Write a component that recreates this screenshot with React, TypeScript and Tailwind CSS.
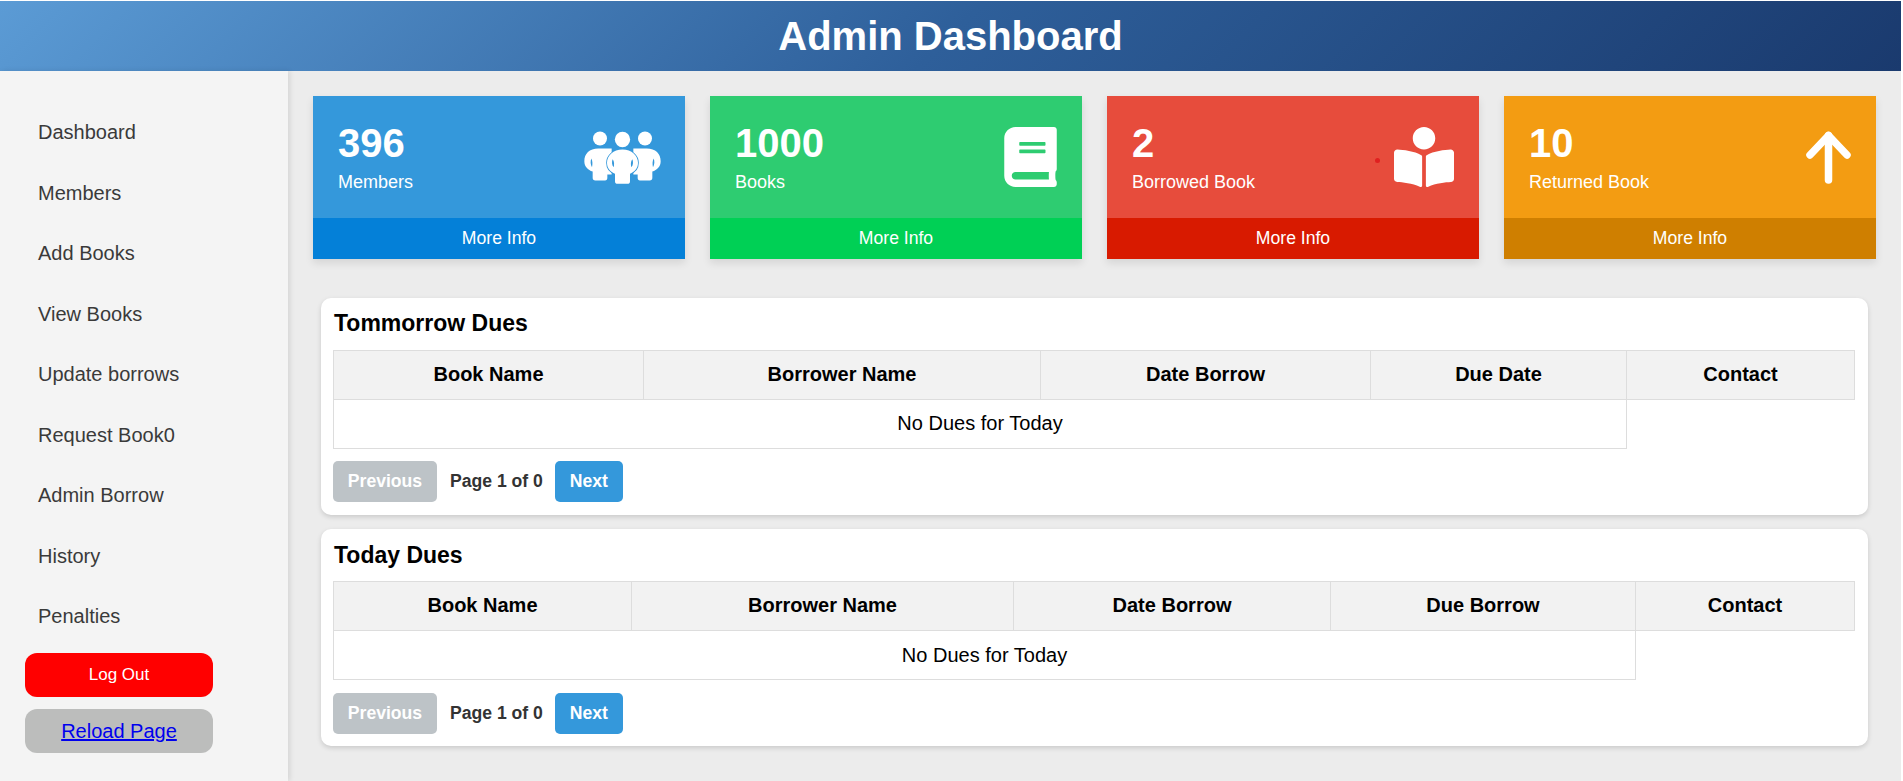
import type { ReactNode } from "react";
import { FaBook, FaBookReader } from "react-icons/fa";

const navItems = [
  "Dashboard",
  "Members",
  "Add Books",
  "View Books",
  "Update borrows",
  "Request Book0",
  "Admin Borrow",
  "History",
  "Penalties",
];

function ArrowIcon() {
  return (
    <svg viewBox="0 0 45 53" className="h-[53px] w-[45px]" fill="none" stroke="white" strokeWidth="7.5" strokeLinecap="round" strokeLinejoin="round">
      <path d="M22.5 4.5V49" />
      <path d="M4 24L22.5 4.5L41 24" />
    </svg>
  );
}

// three figures with hands on hips, traced from the picture
function GroupIcon() {
  const side =
    "M85 112C58 112 43 128 43 150C43 166 54 176 68 181V200Q68 208 76 208H105Q112 208 112 200V190H125V112ZM64 142C61 150 61 160 66 168C68 160 68 150 64 142Z";
  const center =
    "M157.5 115C130 115 111 134 111 155C111 172 122 183 135 188V210Q135 218 143 218H172Q180 218 180 210V188C193 183 204 172 204 155C204 134 185 115 157.5 115Z";
  return (
    <svg viewBox="45 60 225 158" className="h-[53px] w-[75px] overflow-visible" fill="white">
      <circle cx="90" cy="82" r="21" />
      <circle cx="225" cy="82" r="21" />
      <circle cx="157.5" cy="85" r="23" />
      <path d={side} fillRule="evenodd" />
      <path d={side} fillRule="evenodd" transform="matrix(-1 0 0 1 315 0)" />
      <path d={center} fill="#3498db" stroke="#3498db" strokeWidth="5" />
      <path
        d={`${center}M128 144C125 150 125 162 131 168C133 160 133 150 128 144ZM187 144C190 150 190 162 184 168C182 160 182 150 187 144Z`}
        fillRule="evenodd"
      />
    </svg>
  );
}

const cards: {
  value: string;
  label: string;
  body: string;
  foot: string;
  icon: ReactNode;
  dot?: boolean;
}[] = [
  { value: "396", label: "Members", body: "bg-[#3498db]", foot: "bg-[#0480d8]", icon: <GroupIcon /> },
  { value: "1000", label: "Books", body: "bg-[#2ecc71]", foot: "bg-[#00d055]", icon: <FaBook className="h-[60px] w-[53px] text-white" /> },
  { value: "2", label: "Borrowed Book", body: "bg-[#e74c3c]", foot: "bg-[#d81a00]", icon: <FaBookReader className="h-[60px] w-[60px] text-white" />, dot: true },
  { value: "10", label: "Returned Book", body: "bg-[#f39c12]", foot: "bg-[#cf7f00]", icon: <ArrowIcon /> },
];

function StatCard({ card }: { card: (typeof cards)[number] }) {
  return (
    <div className="w-[372px] text-white shadow-[0_4px_8px_rgba(0,0,0,0.1)]">
      <div className={`relative flex h-[122px] items-center justify-between px-[25px] ${card.body}`}>
        <div className="-mt-[3px]">
          <div className="text-[40px] leading-[46px] font-bold">{card.value}</div>
          <div className="mt-[6px] text-[18px] leading-5">{card.label}</div>
        </div>
        {card.icon}
        {card.dot && <span className="absolute top-[62px] left-[268px] h-[5px] w-[5px] rounded-full bg-[#e02020]" />}
      </div>
      <div className={`flex h-[41px] items-center justify-center text-[17.6px] ${card.foot}`}>More Info</div>
    </div>
  );
}

function DuesPanel({
  title,
  headers,
  cols,
  titleClass,
  rowClass,
  pagerClass,
}: {
  title: string;
  headers: string[];
  cols: string[];
  titleClass: string;
  rowClass: string;
  pagerClass: string;
}) {
  return (
    <section className="rounded-[10px] bg-white pt-[11px] pr-[14px] pl-3 shadow-[0_2px_5px_rgba(0,0,0,0.15)]">
      <h3 className={`pl-px text-[23px] leading-7 font-bold text-black ${titleClass}`}>{title}</h3>
      <table className="w-full table-fixed border-collapse text-[20px] text-black">
        <colgroup>
          {cols.map((c, i) => (
            <col key={i} className={c} />
          ))}
        </colgroup>
        <thead>
          <tr>
            {headers.map((h) => (
              <th key={h} className="h-[49px] border border-[#ddd] bg-[#f2f2f2] p-0 pb-[2px] text-center font-bold">
                {h}
              </th>
            ))}
          </tr>
        </thead>
        <tbody>
          <tr>
            <td colSpan={4} className={`h-[49px] border border-[#ddd] p-0 text-center ${rowClass}`}>
              No Dues for Today
            </td>
          </tr>
        </tbody>
      </table>
      <div className={`flex items-center text-[17.6px] font-bold ${pagerClass}`}>
        <button className="h-[41px] w-[104px] rounded-[5px] bg-[#bdc3c7] text-white">Previous</button>
        <span className="mr-3 ml-[13px] text-[#333]">Page 1 of 0</span>
        <button className="h-[41px] w-[68px] rounded-[5px] bg-[#3498db] text-white">Next</button>
      </div>
    </section>
  );
}

export default function App() {
  return (
    <div className="h-screen overflow-hidden bg-white pt-px pr-[2px] font-['Liberation_Sans',Arial,sans-serif]">
      <div className="flex h-full flex-col bg-[#ececec]">
        <header className="flex h-[70px] shrink-0 items-center justify-center bg-[linear-gradient(135deg,#5b9bd5,#2e5f9a_50%,#1a3a6e)] text-[40px] font-bold text-white">
          Admin Dashboard
        </header>
        <div className="flex min-h-0 flex-1">
          <aside className="w-[288px] shrink-0 bg-[#f4f4f4] pt-[31px] shadow-[2px_0_5px_rgba(0,0,0,0.1)]">
            <nav>
              {navItems.map((item) => (
                <a key={item} className="flex h-[60.5px] items-center pl-[38px] text-[20px] text-[#3a3a3a]">
                  {item}
                </a>
              ))}
            </nav>
            <div className="mt-[6px] ml-[25px] flex w-[188px] flex-col gap-3 text-center">
              <button className="h-11 rounded-xl bg-[#ff0000] text-[17px] text-white">Log Out</button>
              <div className="flex h-11 items-center justify-center rounded-xl bg-[#bcbdbc]">
                <a href="#" className="text-xl text-[#0000ee] underline">
                  Reload Page
                </a>
              </div>
            </div>
          </aside>
          <main className="min-w-0 flex-1 px-[25px] pt-[25px]">
            <div className="flex gap-[25px]">
              {cards.map((c) => (
                <StatCard key={c.label} card={c} />
              ))}
            </div>
            <div className="mt-[39px] mr-2 ml-2 flex flex-col gap-[14px]">
              <DuesPanel
                title="Tommorrow Dues"
                headers={["Book Name", "Borrower Name", "Date Borrow", "Due Date", "Contact"]}
                cols={["w-[310px]", "w-[397px]", "w-[330px]", "w-[256px]", "w-[228px]"]}
                titleClass="mb-[13px]"
                rowClass="pb-[2px]"
                pagerClass="mt-3 pb-[13px]"
              />
              <DuesPanel
                title="Today Dues"
                headers={["Book Name", "Borrower Name", "Date Borrow", "Due Borrow", "Contact"]}
                cols={["w-[298px]", "w-[382px]", "w-[317px]", "w-[305px]", "w-[219px]"]}
                titleClass="mt-px mb-3"
                rowClass=""
                pagerClass="mt-[13px] pb-3"
              />
            </div>
          </main>
        </div>
      </div>
    </div>
  );
}
